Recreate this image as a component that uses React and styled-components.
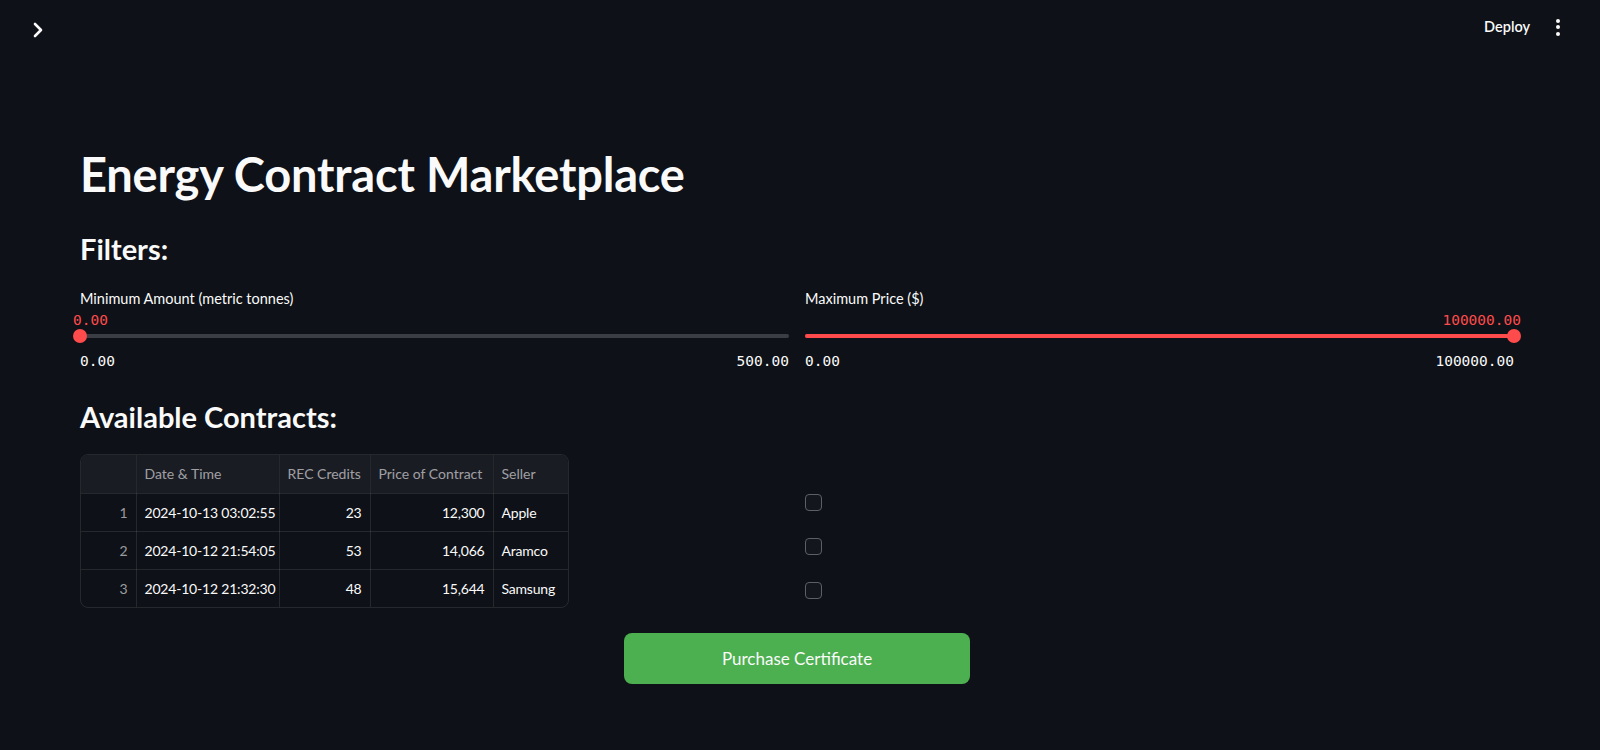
import React from 'react'
import styled, { createGlobalStyle } from 'styled-components'
import { ChevronRight } from 'lucide-react'

const GlobalStyle = createGlobalStyle`
    *, *::before, *::after { box-sizing:border-box; }
    html, body {
        margin:0;
        padding:0;
        background:#0e1117;
    }
    body {
        font-family: Lato, "Noto Sans", sans-serif;
        color:#fafafa;
    }
`

const contracts = [
    { date: '2024-10-13 03:02:55', credits: 23, price: '12,300', seller: 'Apple' },
    { date: '2024-10-12 21:54:05', credits: 53, price: '14,066', seller: 'Aramco' },
    { date: '2024-10-12 21:32:30', credits: 48, price: '15,644', seller: 'Samsung' },
]

const columns = [
    { key: 'index', label: '', width: 55 },
    { key: 'date', label: 'Date & Time', width: 143 },
    { key: 'credits', label: 'REC Credits', width: 91 },
    { key: 'price', label: 'Price of Contract', width: 123 },
    { key: 'seller', label: 'Seller', width: 77 },
]

function Slider({ label, value, min, max, fill }) {
    return (
        <SliderWrap>
            <SliderLabel>{label}</SliderLabel>
            <ValueRow atEnd={fill}>
                <RedValue>{value}</RedValue>
            </ValueRow>
            <Track>
                <TrackFill style={{ width: fill ? '100%' : '0%' }} />
                <Thumb atEnd={fill} />
            </Track>
            <RangeRow>
                <span>{min}</span>
                <span>{max}</span>
            </RangeRow>
        </SliderWrap>
    )
}

function App() {
    return (
        <Page>
            <GlobalStyle />
            <Header>
                <MenuToggle>
                    <ChevronRight size={24} strokeWidth={2.6} />
                </MenuToggle>
                <HeaderRight>
                    <DeployButton>Deploy</DeployButton>
                    <Kebab>
                        <Dot /><Dot /><Dot />
                    </Kebab>
                </HeaderRight>
            </Header>
            <Main>
                <Title>Energy Contract Marketplace</Title>
                <SubTitle>Filters:</SubTitle>
                <Columns>
                    <Slider label="Minimum Amount (metric tonnes)" value="0.00" min="0.00" max="500.00" />
                    <Slider label="Maximum Price ($)" value="100000.00" min="0.00" max="100000.00" fill />
                </Columns>
                <SubTitle top={26}>Available Contracts:</SubTitle>
                <Columns>
                    <TableBox>
                        <Table>
                            <colgroup>
                                {columns.map(c => <col key={c.key} style={{ width: c.width }} />)}
                            </colgroup>
                            <thead>
                                <tr>
                                    {columns.map(c => <Th key={c.key}>{c.label}</Th>)}
                                </tr>
                            </thead>
                            <tbody>
                                {contracts.map((row, i) => (
                                    <tr key={i}>
                                        <IndexCell>{i + 1}</IndexCell>
                                        <Td>{row.date}</Td>
                                        <Td align="right">{row.credits}</Td>
                                        <Td align="right">{row.price}</Td>
                                        <Td>{row.seller}</Td>
                                    </tr>
                                ))}
                            </tbody>
                        </Table>
                    </TableBox>
                    <CheckList>
                        {contracts.map((_, i) => <CheckBox key={i} />)}
                    </CheckList>
                </Columns>
                <ButtonRow>
                    <PurchaseButton>Purchase Certificate</PurchaseButton>
                </ButtonRow>
            </Main>
        </Page>
    )
}

const Page = styled.div`
    min-height:100vh;
    background:#0e1117;
`

const Header = styled.div`
    height:60px;
    display:flex;
    justify-content:space-between;
    align-items:flex-start;
    padding:0 38px 0 26px;
`

const MenuToggle = styled.div`
    margin-top:18px;
    width:24px;
    height:24px;
    color:#fafafa;
    display:flex;
`

const HeaderRight = styled.div`
    display:flex;
    align-items:center;
    gap:24px;
    margin-top:17px;
`

const DeployButton = styled.div`
    font-size:14.5px;
    font-weight:600;
    color:#fafafa;
    line-height:20px;
`

const Kebab = styled.div`
    display:flex;
    flex-direction:column;
    gap:2.5px;
    align-items:center;
    width:8px;
`

const Dot = styled.span`
    width:4px;
    height:4px;
    border-radius:50%;
    background:#fafafa;
`

const Main = styled.div`
    padding:0 86px 40px 80px;
    display:flex;
    flex-direction:column;
`

const Title = styled.h1`
    margin:86px 0 0 0;
    font-size:47px;
    font-weight:700;
    line-height:56px;
    letter-spacing:-0.2px;
`

const SubTitle = styled.h2`
    margin:${p => p.top || 27}px 0 0 0;
    font-size:29px;
    font-weight:700;
    line-height:40px;
`

const Columns = styled.div`
    display:grid;
    grid-template-columns:709px 709px;
    column-gap:16px;
`

const SliderWrap = styled.div`
    display:flex;
    flex-direction:column;
    margin-top:19px;
`

const SliderLabel = styled.div`
    font-size:14.5px;
    line-height:21px;
    color:#fafafa;
`

const ValueRow = styled.div`
    display:flex;
    justify-content:${p => p.atEnd ? 'flex-end' : 'flex-start'};
    margin:${p => p.atEnd ? '0 -7px 0 0' : '0 0 0 -7px'};
    height:22px;
    align-items:center;
`

const RedValue = styled.span`
    font-family:"DejaVu Sans Mono", monospace;
    font-size:14.5px;
    color:#ff4b4b;
`

const Track = styled.div`
    position:relative;
    height:4px;
    border-radius:2px;
    background:#3b3d45;
    margin-top:3px;
`

const TrackFill = styled.div`
    height:100%;
    border-radius:2px;
    background:#ff4b4b;
`

const Thumb = styled.div`
    position:absolute;
    top:-5px;
    left:${p => p.atEnd ? 'calc(100% - 7px)' : '-7px'};
    width:14px;
    height:14px;
    border-radius:50%;
    background:#ff4b4b;
`

const RangeRow = styled.div`
    display:flex;
    justify-content:space-between;
    font-family:"DejaVu Sans Mono", monospace;
    font-size:14.5px;
    line-height:20px;
    margin-top:13px;
    color:#fafafa;
`

const TableBox = styled.div`
    margin-top:17px;
    width:489px;
    border:1px solid rgba(250,250,250,0.1);
    border-radius:8px;
    overflow:hidden;
`

const Table = styled.table`
    width:100%;
    border-collapse:collapse;
    table-layout:fixed;
    font-size:14px;
`

const Th = styled.th`
    height:38px;
    padding:0 8px;
    background:#1a1c24;
    color:rgba(250,250,250,0.6);
    font-weight:400;
    text-align:left;
    border-right:1px solid rgba(250,250,250,0.1);
    border-bottom:1px solid rgba(250,250,250,0.1);
    white-space:nowrap;
    overflow:hidden;
    &:last-child { border-right:none; }
`

const Td = styled.td`
    height:38px;
    padding:0 8px;
    text-align:${p => p.align || 'left'};
    color:#fafafa;
    border-right:1px solid rgba(250,250,250,0.1);
    border-bottom:1px solid rgba(250,250,250,0.1);
    white-space:nowrap;
    letter-spacing:-0.2px;
    tr:last-child & { border-bottom:none; }
    &:last-child { border-right:none; }
`

const IndexCell = styled(Td)`
    text-align:right;
    color:rgba(250,250,250,0.6);
`

const CheckList = styled.div`
    display:flex;
    flex-direction:column;
    gap:27px;
    padding-top:57px;
`

const CheckBox = styled.div`
    width:17px;
    height:17px;
    border:1.5px solid #5c5f66;
    border-radius:4px;
    background:#13161d;
`

const ButtonRow = styled.div`
    display:flex;
    justify-content:center;
    margin-top:25px;
`

const PurchaseButton = styled.button`
    width:346px;
    height:51px;
    border:none;
    border-radius:8px;
    background:#4caf50;
    color:#fafafa;
    font-family:Lato, "Noto Sans", sans-serif;
    font-size:17px;
    cursor:pointer;
`

export default App
